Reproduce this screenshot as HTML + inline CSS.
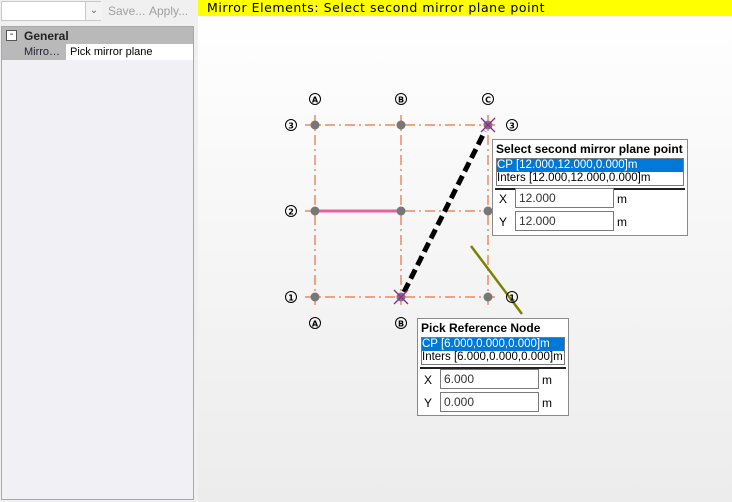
<!DOCTYPE html><html><head><style>
body{margin:0;width:732px;height:502px;overflow:hidden;font-family:"Liberation Sans",sans-serif;font-size:12px;position:relative;background:#f0f0f0}
.a{position:absolute}
.dlg{position:absolute;background:#fff;border:1px solid #8a8a8a}
.dlg .t{font-weight:bold;font-size:12px;padding:2px 3px;color:#000}
.lst{margin:0 3px;border:1px solid #7a7a7a;font-size:11.5px;line-height:13px}
.sel{background:#0078d7;color:#fff}
.sep{border-top:2px solid #222;margin:2px 2px 0}
.in{position:absolute;border:1px solid #7a7a7a;height:18px;font-size:12px;line-height:18px;padding-left:3px;color:#333;background:#fff}
</style></head><body>
<div class="a" style="left:0;top:0;width:197px;height:502px;background:#f0f0f0"></div>
<div class="a" style="left:1px;top:1px;width:100px;height:20px;border:1px solid #c8c8c8;background:#fff;box-sizing:border-box"></div>
<div class="a" style="left:85px;top:2px;width:16px;height:18px;border-left:1px solid #c8c8c8;background:#f3f3f3;color:#666;font-size:10px;text-align:center;line-height:18px">&#8964;</div>
<div class="a" style="left:108px;top:4px;color:#a0a0a0">Save...</div>
<div class="a" style="left:149px;top:4px;color:#a0a0a0">Apply...</div>
<div class="a" style="left:1px;top:26px;width:193px;height:474px;border:1px solid #a8a8a8;background:#f0f0f5;box-sizing:border-box"></div>
<div class="a" style="left:2px;top:27px;width:191px;height:17px;background:#b9b9b9"></div>
<div class="a" style="left:6px;top:30px;width:9px;height:9px;border:1px solid #555;background:#fff;font-size:10px;line-height:7px;text-align:center">-</div>
<div class="a" style="left:24px;top:29px;font-weight:bold;color:#222">General</div>
<div class="a" style="left:2px;top:44px;width:64px;height:16px;background:#b9b9b9"></div>
<div class="a" style="left:66px;top:44px;width:127px;height:16px;background:#fff"></div>
<div class="a" style="left:24px;top:46px;font-size:11px;color:#223">Mirro…</div>
<div class="a" style="left:70px;top:46px;font-size:11px;color:#000">Pick mirror plane</div>
<div class="a" style="left:198px;top:0;width:534px;height:502px;background:linear-gradient(#fff,#ececec)"></div>
<div class="a" style="left:198px;top:0;width:534px;height:16px;background:#ffff00;font-family:'DejaVu Sans',sans-serif;font-size:12.5px;line-height:16px;padding-left:9px;box-sizing:border-box;letter-spacing:.55px">Mirror Elements: Select second mirror plane point</div>
<svg class="a" style="left:0;top:0" width="732" height="502">
<g stroke="#f08a60" stroke-width="1.5" stroke-dasharray="10,4,2,4" fill="none">
<line x1="315" y1="115" x2="315" y2="307"/><line x1="401" y1="115" x2="401" y2="307"/><line x1="488" y1="115" x2="488" y2="307"/>
<line x1="305" y1="125" x2="497" y2="125"/><line x1="305" y1="211" x2="497" y2="211"/><line x1="305" y1="297" x2="497" y2="297"/>
</g>
<line x1="315" y1="211" x2="401" y2="211" stroke="#e860a0" stroke-width="3"/>
<g fill="#777"><circle cx="315" cy="125" r="4.5"/><circle cx="401" cy="125" r="4.5"/><circle cx="315" cy="211" r="4.5"/><circle cx="401" cy="211" r="4.5"/><circle cx="488" cy="211" r="4.5"/><circle cx="315" cy="297" r="4.5"/><circle cx="401" cy="297" r="4.5"/><circle cx="488" cy="297" r="4.5"/><circle cx="488" cy="125" r="4.5"/></g>
<line x1="404" y1="292" x2="485" y2="131" stroke="#000" stroke-width="5" stroke-dasharray="10,5"/>
<g stroke="#a020a0" stroke-width="1.3"><line x1="481" y1="118" x2="495" y2="132"/><line x1="495" y1="118" x2="481" y2="132"/><line x1="394" y1="290" x2="408" y2="304"/><line x1="408" y1="290" x2="394" y2="304"/></g>
<line x1="471" y1="246" x2="522" y2="314" stroke="#808000" stroke-width="2.5"/>
<g font-family="DejaVu Sans" font-size="9" font-weight="bold" text-anchor="middle">
<g fill="none" stroke="#000" stroke-width="1"><circle cx="315" cy="99" r="5.5"/><circle cx="401" cy="99" r="5.5"/><circle cx="488" cy="99" r="5.5"/><circle cx="315" cy="323" r="5.5"/><circle cx="401" cy="323" r="5.5"/><circle cx="291" cy="125" r="5.5"/><circle cx="291" cy="211" r="5.5"/><circle cx="291" cy="297" r="5.5"/><circle cx="512" cy="125" r="5.5"/><circle cx="512" cy="297" r="5.5"/></g>
<text x="315" y="102.5" font-size="8">A</text><text x="401" y="102.5" font-size="8">B</text><text x="488" y="102.5" font-size="8">C</text>
<text x="315" y="326.5" font-size="8">A</text><text x="401" y="326.5" font-size="8">B</text>
<text x="291" y="128.5" font-size="8">3</text><text x="291" y="214.5" font-size="8">2</text><text x="291" y="300.5" font-size="8">1</text>
<text x="512" y="128.5" font-size="8">3</text><text x="512" y="300.5" font-size="8">1</text>
</g>
</svg>
<div class="dlg" style="left:492px;top:139px;width:194px;height:95px">
<div class="t">Select second mirror plane point</div>
<div class="lst"><div class="sel">CP [12.000,12.000,0.000]m</div><div>Inters [12.000,12.000,0.000]m</div></div>
<div class="sep"></div>
<div class="a" style="left:6px;top:52px">X</div><div class="in" style="left:22px;top:48px;width:94px">12.000</div><div class="a" style="left:124px;top:52px">m</div>
<div class="a" style="left:6px;top:75px">Y</div><div class="in" style="left:22px;top:71px;width:94px">12.000</div><div class="a" style="left:124px;top:75px">m</div>
</div>
<div class="dlg" style="left:417px;top:318px;width:150px;height:96px">
<div class="t">Pick Reference Node</div>
<div class="lst"><div class="sel">CP [6.000,0.000,0.000]m</div><div>Inters [6.000,0.000,0.000]m</div></div>
<div class="sep"></div>
<div class="a" style="left:6px;top:54px">X</div><div class="in" style="left:22px;top:50px;width:94px">6.000</div><div class="a" style="left:124px;top:54px">m</div>
<div class="a" style="left:6px;top:77px">Y</div><div class="in" style="left:22px;top:73px;width:94px">0.000</div><div class="a" style="left:124px;top:77px">m</div>
</div>
</body></html>
